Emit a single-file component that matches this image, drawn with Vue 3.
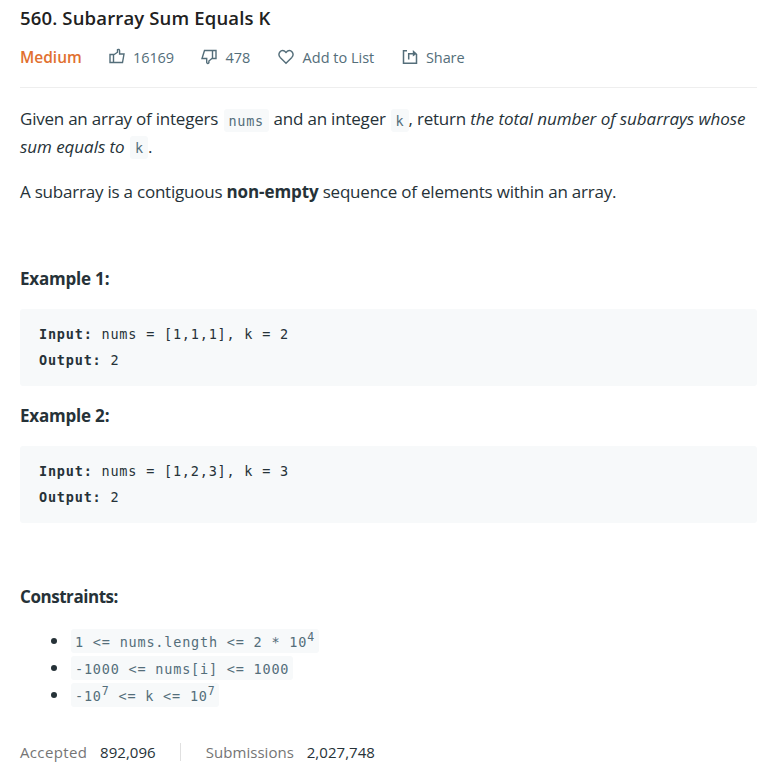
<script setup>
const examples = [
  { title: 'Example 1:', input: 'nums = [1,1,1], k = 2', output: '2' },
  { title: 'Example 2:', input: 'nums = [1,2,3], k = 3', output: '2' },
]
</script>

<template>
  <main class="problem">
    <h1 class="title">560. Subarray Sum Equals K</h1>
    <div class="meta">
      <span class="difficulty">Medium</span>
      <span class="action like">
        <svg viewBox="0 0 16 16"><path d="M1 6.5h3.5v8H1zM4.5 7 8.5 4.2V1.6q1.6-.7 2.1 1V6H15l-1.5 8.5h-9" /></svg>
        <span>16169</span>
      </span>
      <span class="action dislike">
        <svg viewBox="0 0 16 16"><path d="M11.5 1.5H15v8h-3.5zM11.5 1.5h-8L1 9.5h4.7v4q.8 1.8 2.2.3V12l3.6-3" /></svg>
        <span>478</span>
      </span>
      <span class="action favorite">
        <svg viewBox="0 0 16 16"><path d="M8 14.3 2.2 8.4C-1 4.8 3-.3 6.7 2.2L8 3.5l1.3-1.3C13-.3 17 4.8 13.8 8.4z" /></svg>
        <span>Add to List</span>
      </span>
      <span class="action share">
        <svg viewBox="0 0 16 16"><path d="M5 1.8H1.5v12.4h13V5" /><path d="M6.7 10.5V4.8h6" /><path class="head" d="M10.8 1 15 4.8l-4.2 2.8z" /></svg>
        <span>Share</span>
      </span>
    </div>

    <section class="content">
      <p class="intro">
        <span class="line"><span class="a">Given an array of integers</span><code class="nums">nums</code><span class="b">and an integer</span><code class="k">k</code><span class="c">, return <em>the total number of subarrays whose</em></span></span>
        <span class="line second"><em class="d">sum equals to</em><code class="k">k</code><span class="dot">.</span></span>
      </p>
      <p class="definition">A subarray is a contiguous <strong>non-empty</strong> sequence of elements within an array.</p>

      <div v-for="ex in examples" :key="ex.title" class="example">
        <h2>{{ ex.title }}</h2>
        <pre><strong>Input:</strong> {{ ex.input }}
<strong>Output:</strong> {{ ex.output }}</pre>
      </div>

      <h2 class="constraints-title">Constraints:</h2>
      <ul>
        <li><code>1 &lt;= nums.length &lt;= 2 * 10<sup>4</sup></code></li>
        <li><code>-1000 &lt;= nums[i] &lt;= 1000</code></li>
        <li><code>-10<sup>7</sup> &lt;= k &lt;= 10<sup>7</sup></code></li>
      </ul>
    </section>

    <footer>
      <span class="label accepted">Accepted</span><span class="value">892,096</span>
      <i class="separator"></i>
      <span class="label submissions">Submissions</span><span class="value">2,027,748</span>
    </footer>
  </main>
</template>

<style>
body { margin: 0; background: #fff; }
</style>

<style scoped>
.problem { box-sizing: border-box; width: 770px; height: 775px; overflow: hidden; padding: 4px 13px 0 20px; font-family: "Open Sans", "Noto Sans", sans-serif; color: #263238; }
h1, h2, p, ul, pre { margin: 0; padding: 0; }
.title { height: 28px; line-height: 28px; font-size: 18.5px; font-weight: 600; letter-spacing: .15px; color: #212121; white-space: nowrap; }
.meta { display: flex; align-items: center; box-sizing: border-box; height: 56px; padding-bottom: 5px; border-bottom: 1px solid #eee; font-size: 14.5px; letter-spacing: -.1px; color: #546e7a; white-space: nowrap; }
.difficulty { width: 89px; font-size: 15.5px; font-weight: 600; letter-spacing: 0; color: #e1702f; }
.action { display: flex; align-items: center; gap: 8px; }
.like { width: 92px; }
.dislike { width: 77px; }
.dislike > span { margin-left: .6px; }
.favorite { width: 124px; letter-spacing: 0; }
.favorite > span { margin-left: .6px; }
svg { width: 16px; height: 16px; fill: none; stroke: #546e7a; stroke-width: 1.4; flex: none; }
.like svg { position: relative; top: -1px; }
.share svg { stroke-width: 1.5; }
.head { fill: #546e7a; stroke: none; }
.content { padding-top: 17px; font-size: 17px; letter-spacing: -.2px; }
em { letter-spacing: -.05px; }
.line { display: flex; height: 28px; line-height: 28px; white-space: nowrap; }
.a { width: 203.5px; letter-spacing: -.23px; }
.b { margin-left: 5px; width: 117px; }
code, pre { font-family: "DejaVu Sans Mono", "Liberation Mono", monospace; }
code { font-size: 13.5px; color: #546e7a; background: #f7f9fa; border-radius: 3px; }
.line code { box-sizing: border-box; height: 23px; margin-top: 4px; line-height: 24px; padding-left: 5px; }
.second code { margin-top: 3px; }
.nums { width: 45px; letter-spacing: .7px; }
.k { width: 18px; }
.line .d { width: 110px; }
.definition { height: 28px; line-height: 28px; margin-top: 17px; margin-bottom: 59px; letter-spacing: -.22px; white-space: nowrap; }
.definition strong { letter-spacing: -.1px; }
h2 { height: 28px; line-height: 28px; font-size: 17px; font-weight: 700; letter-spacing: -.2px; }
pre { box-sizing: border-box; height: 77px; margin: 16px 0; padding: 12px 19px; line-height: 26px; font-size: 13.5px; letter-spacing: .8px; background: #f7f9fa; border-radius: 3px; }
.constraints-title { margin-top: 60px; letter-spacing: -.45px; }
ul { margin-top: 18px; padding-left: 51px; list-style: none; }
li { display: flex; position: relative; height: 27px; }
li::before { content: ""; position: absolute; left: -20px; top: 9px; width: 6px; height: 6px; border-radius: 50%; background: #263238; }
li code { height: 24px; line-height: 26px; padding: 0 4px; letter-spacing: .8px; white-space: pre; }
sup { font-size: 11.5px; line-height: 0; vertical-align: 6px; }
footer { display: flex; align-items: center; height: 28px; margin-top: 28px; font-size: 15px; white-space: nowrap; }
.label { color: #757575; }
.accepted { width: 80px; letter-spacing: .35px; }
.submissions { width: 101px; letter-spacing: .05px; }
.value { letter-spacing: .05px; }
.separator { width: 1px; height: 18px; margin: 0 25px 0 24px; background: #e0e0e0; }
</style>
